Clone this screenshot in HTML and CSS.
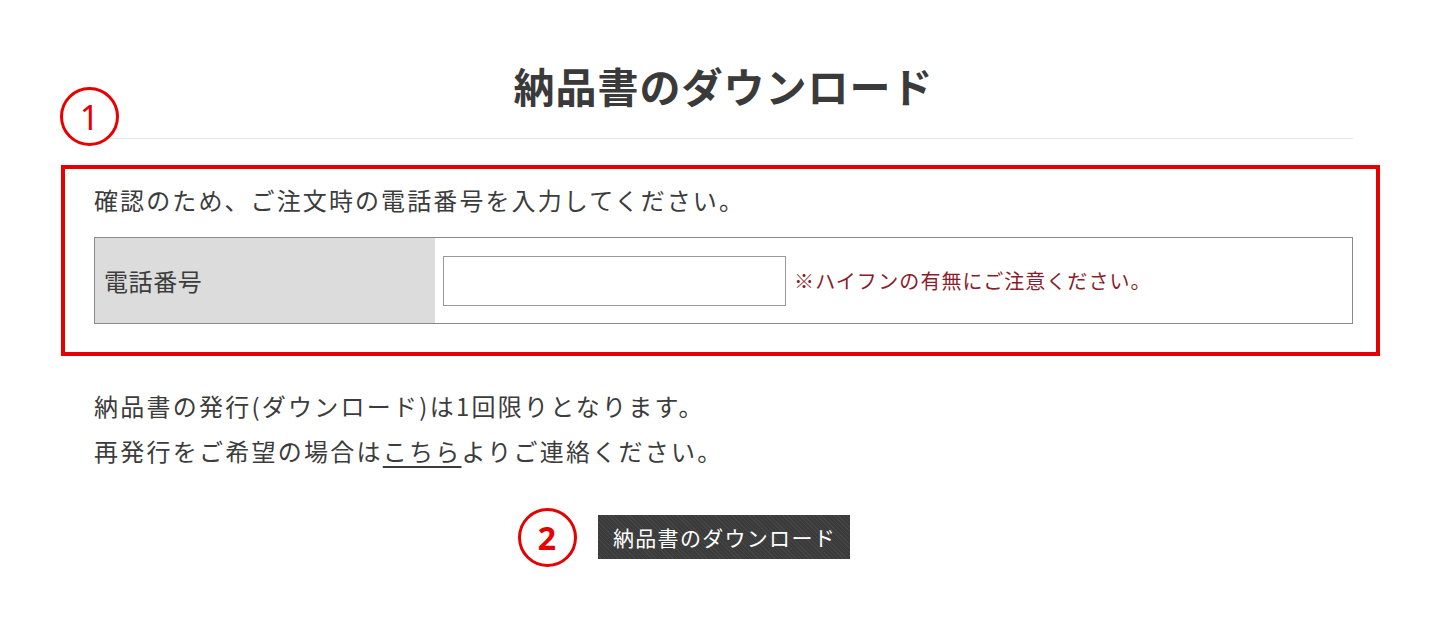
FILE: index.html
```html
<!DOCTYPE html>
<html lang="ja">
<head>
<meta charset="utf-8">
<title>納品書のダウンロード</title>
<link rel="stylesheet" href="styles.css">
</head>
<body>

<div class="page">
  <h1 class="title">納品書のダウンロード</h1>
  <span class="step step1">1</span>

  <div class="confirm">
    <p class="lead">確認のため、ご注文時の電話番号を入力してください。</p>
    <table class="form-table">
      <tr>
        <th>電話番号</th>
        <td>
          <input type="text" id="tel" name="tel">
          <span class="note">※ハイフンの有無にご注意ください。</span>
        </td>
      </tr>
    </table>
  </div>

  <p class="info">
    納品書の発行(ダウンロード)は1回限りとなります。<br>
    再発行をご希望の場合は<a href="#">こちら</a>よりご連絡ください。
  </p>

  <div class="actions">
    <span class="step step2">2</span>
    <button type="button" class="btn">納品書のダウンロード</button>
  </div>
</div>

</body>
</html>
```

FILE: styles.css
```css
body {
  margin: 0;
  background: #fff;
  color: #3c3c3c;
  font-family: "Noto Sans CJK JP", "Noto Sans", sans-serif;
}

.page {
  position: relative;
  width: 1259px;
  margin-left: 94px;
  padding-top: 57px;
  padding-bottom: 60px;
}

.title {
  margin: 0;
  padding-bottom: 24px;
  border-bottom: 1px solid #e6e6e6;
  text-align: center;
  font-size: 41px;
  line-height: 57px;
  font-weight: 700;
  letter-spacing: 1px;
  color: #3a3a3a;
}

/* 注釈の番号 */
.step {
  position: absolute;
  box-sizing: border-box;
  width: 59px;
  height: 59px;
  border: 3px solid #e60000;
  border-radius: 50%;
  background: #fff;
  color: #e60000;
  display: flex;
  align-items: center;
  justify-content: center;
  font-family: "Noto Sans", sans-serif;
  font-size: 32px;
  line-height: 1;
}

.step1 {
  left: -34px;
  top: 87px;
  font-weight: 400;
  font-size: 34px;
}

.step2 {
  left: -80px;
  top: -7px;
  font-weight: 700;
}

.confirm {
  margin: 26px -27px 0 -33px;
  padding: 13px 23px 28px 29px;
  border: 4px solid #e60000;
}

.lead {
  margin: 0 0 20px;
  font-size: 24px;
  line-height: 35px;
  letter-spacing: 2.1px;
}

.form-table {
  width: 100%;
  border-collapse: collapse;
  border: 1px solid #8a8a8a;
}

.form-table th {
  width: 340px;
  height: 86px;
  padding: 0 0 0 9px;
  box-sizing: border-box;
  background: #dcdcdc;
  text-align: left;
  font-weight: 400;
  font-size: 24px;
  letter-spacing: 0.6px;
}

.form-table td {
  padding: 0 0 0 8px;
  background: #fff;
}

.form-table input {
  box-sizing: border-box;
  width: 343px;
  height: 50px;
  margin: 0;
  border: 1px solid #999;
  border-radius: 0;
  vertical-align: middle;
  font-size: 20px;
}

.note {
  margin-left: 5px;
  vertical-align: middle;
  color: #8b1c2c;
  font-size: 20px;
  letter-spacing: 1.05px;
}

.info {
  margin: 27px 0 0;
  font-size: 24px;
  line-height: 45px;
  letter-spacing: 2.25px;
}

.info a {
  color: #3c3c3c;
  text-decoration: underline;
  text-decoration-thickness: 2px;
  text-underline-offset: 5px;
}

.actions {
  position: relative;
  width: 252px;
  margin: 42px auto 0;
}

.btn {
  display: block;
  width: 252px;
  height: 44px;
  padding: 0 0 0 2px;
  border: none;
  border-radius: 0;
  color: #fff;
  background-color: #3b3b3b;
  background-image: repeating-linear-gradient(45deg, #3b3b3b 0 2px, #454545 2px 3px);
  font-family: "Noto Sans CJK JP", sans-serif;
  font-size: 21px;
  letter-spacing: 1.3px;
  cursor: pointer;
}
```
